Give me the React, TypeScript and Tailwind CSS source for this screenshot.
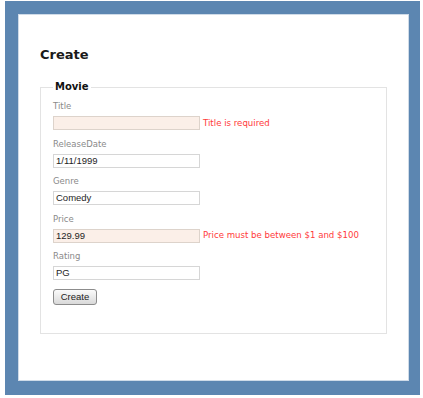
const labelFont = { fontFamily: '"DejaVu Sans", Verdana, sans-serif' };

interface FieldProps {
  label: string;
  value: string;
  error?: string;
}

const Field = ({ label, value, error }: FieldProps) => {
  return (
    <div className="mb-[8.5px]">
      <div
        className="h-[11px] text-[8.5px] leading-[11px] text-[#8a8a8a]"
        style={labelFont}
      >
        {label}
      </div>
      <div className="mt-[4px] flex items-center">
        <div
          className={
            error
              ? 'h-[14px] w-[147px] border border-[#ddd3cb] bg-[#fbefe8] pl-[2px] text-[9.5px] leading-[12px] text-[#1e1e1e]'
              : 'h-[14px] w-[147px] border border-[#d6d6d6] bg-white pl-[2px] text-[9.5px] leading-[12px] text-[#1e1e1e]'
          }
          style={{ fontFamily: '"Liberation Sans", Arial, sans-serif' }}
        >
          {value}
        </div>
        {error && (
          <span
            className="ml-[3px] text-[8.6px] leading-[11px] text-[#ff3a3a]"
            style={labelFont}
          >
            {error}
          </span>
        )}
      </div>
    </div>
  );
};

export default function App() {
  return (
    <div className="h-[398px] w-[423px] bg-white pl-[5px] pt-px">
      <div className="h-[394px] w-[415px] bg-[#5c86b1] pl-[13px] pt-[13px]">
        <div className="h-[367px] w-[391px] border border-[#cfdbe8] bg-white pl-[21px] pt-[32px]">
          <h2
            className="text-[13px] font-bold leading-[16px] text-[#1a1a1a]"
            style={labelFont}
          >
            Create
          </h2>
          <fieldset className="mt-[18px] h-[253px] w-[347px] border border-[#e3e3e3] pl-[12px] pt-[8px]">
            <legend
              className="px-[2px] text-[10px] font-bold leading-[12px] text-[#111]"
              style={labelFont}
            >
              Movie
            </legend>
            <Field label="Title" value="" error="Title is required" />
            <Field label="ReleaseDate" value="1/11/1999" />
            <Field label="Genre" value="Comedy" />
            <Field label="Price" value="129.99" error="Price must be between $1 and $100" />
            <Field label="Rating" value="PG" />
            <button
              className="mt-[1px] block h-[16px] w-[44px] rounded-[3px] border border-[#8c8c8c] bg-gradient-to-b from-[#fbfbfb] to-[#d9d9d9] text-[9.5px] leading-[14px] text-[#222]"
              style={{ fontFamily: '"Liberation Sans", Arial, sans-serif' }}
            >
              Create
            </button>
          </fieldset>
        </div>
      </div>
    </div>
  );
}
